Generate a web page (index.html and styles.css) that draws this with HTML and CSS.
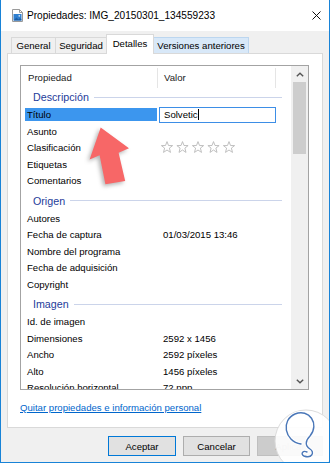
FILE: index.html
```html
<!DOCTYPE html>
<html>
<head>
  <title>Propiedades: IMG_20150301_134559233</title>
  <link rel="stylesheet" href="styles.css">
</head>
<body>

<div class="window">
  <div class="titlebar">
    <svg class="app-icon" width="11" height="13" viewBox="0 0 11 13">
      <path d="M0.5 0.5h7l3 3v9h-10z" fill="#fff" stroke="#9a9a9a"/>
      <path d="M7.5 0.5v3h3" fill="none" stroke="#9a9a9a"/>
      <rect x="1.5" y="5" width="8" height="6.5" fill="#2f7fd0"/>
      <path d="M1.5 11.5l3-3 2 2 1.5-1.5 1.5 1.5v1z" fill="#1d5ea6"/>
      <circle cx="7.3" cy="6.8" r="0.9" fill="#cfe4f8"/>
    </svg>
    <span class="title">Propiedades: IMG_20150301_134559233</span>
    <svg class="close" width="9" height="9" viewBox="0 0 9 9">
      <path d="M0.5 0.5L8.5 8.5M8.5 0.5L0.5 8.5" stroke="#111" stroke-width="1"/>
    </svg>
  </div>

  <div class="content">
    <div class="tabs">
      <div class="tab tab-general">General</div>
      <div class="tab tab-seguridad">Seguridad</div>
      <div class="tab tab-detalles active">Detalles</div>
      <div class="tab tab-versiones hover">Versiones anteriores</div>
    </div>

    <div class="panel">
      <div class="list">
        <div class="list-body">
          <div class="list-head">
            <div class="head-col1">Propiedad</div>
            <div class="head-col2">Valor</div>
          </div>

          <div class="group first"><span>Descripción</span><i class="rule"></i></div>
          <div class="row">
            <div class="cell1 selected">Título</div>
            <div class="cell2 edit-cell"><div class="edit">Solvetic<i class="caret"></i></div></div>
          </div>
          <div class="row"><div class="cell1">Asunto</div><div class="cell2"></div></div>
          <div class="row">
            <div class="cell1">Clasificación</div>
            <div class="cell2 stars-cell">
              <svg class="stars" width="76" height="13" viewBox="0 0 76 13">
                <defs>
                  <polygon id="star" points="6,0.6 7.5,4.5 11.6,4.6 8.4,7.1 9.5,11.4 6,9 2.5,11.4 3.6,7.1 0.4,4.6 4.5,4.5" fill="none" stroke="#b9b9b9" stroke-width="0.9" stroke-linejoin="round"/>
                </defs>
                <use href="#star" x="0"/>
                <use href="#star" x="15.5"/>
                <use href="#star" x="31"/>
                <use href="#star" x="46.5"/>
                <use href="#star" x="62"/>
              </svg>
            </div>
          </div>
          <div class="row"><div class="cell1">Etiquetas</div><div class="cell2"></div></div>
          <div class="row"><div class="cell1">Comentarios</div><div class="cell2"></div></div>

          <div class="group"><span>Origen</span><i class="rule"></i></div>
          <div class="row"><div class="cell1">Autores</div><div class="cell2"></div></div>
          <div class="row"><div class="cell1">Fecha de captura</div><div class="cell2">01/03/2015 13:46</div></div>
          <div class="row"><div class="cell1">Nombre del programa</div><div class="cell2"></div></div>
          <div class="row"><div class="cell1">Fecha de adquisición</div><div class="cell2"></div></div>
          <div class="row"><div class="cell1">Copyright</div><div class="cell2"></div></div>

          <div class="group"><span>Imagen</span><i class="rule"></i></div>
          <div class="row"><div class="cell1">Id. de imagen</div><div class="cell2"></div></div>
          <div class="row"><div class="cell1">Dimensiones</div><div class="cell2">2592 x 1456</div></div>
          <div class="row"><div class="cell1">Ancho</div><div class="cell2">2592 píxeles</div></div>
          <div class="row"><div class="cell1">Alto</div><div class="cell2">1456 píxeles</div></div>
          <div class="row"><div class="cell1">Resolución horizontal</div><div class="cell2">72 ppp</div></div>
        </div>

        <div class="scrollbar">
          <div class="sb-btn">
            <svg width="8" height="5" viewBox="0 0 8 5"><path d="M0.8 4.3L4 1.2L7.2 4.3" fill="none" stroke="#555" stroke-width="1.4"/></svg>
          </div>
          <div class="sb-thumb"></div>
          <div class="sb-track"></div>
          <div class="sb-btn">
            <svg width="8" height="5" viewBox="0 0 8 5"><path d="M0.8 0.7L4 3.8L7.2 0.7" fill="none" stroke="#555" stroke-width="1.4"/></svg>
          </div>
        </div>
      </div>

      <a class="remove-link" href="#">Quitar propiedades e información personal</a>
    </div>

    <div class="buttons">
      <button class="btn default">Aceptar</button>
      <button class="btn">Cancelar</button>
      <button class="btn disabled">Aplicar</button>
    </div>
  </div>

  <!-- annotation arrow drawn over the dialog -->
  <svg class="arrow" width="330" height="463" viewBox="0 0 330 463">
    <polygon points="100.7,127.5 129,148.3 118.6,152.8 125.2,181 105.4,184.2 99.6,155.2 89.6,159.4" fill="#f76767"/>
  </svg>

  <!-- watermark logo -->
  <svg class="logo" width="330" height="463" viewBox="0 0 330 463">
    <circle cx="306" cy="441" r="31" fill="rgba(255,255,255,0.9)" stroke="#dcdcdc" stroke-width="1"/>
    <path d="M301 444 C284 441 281 420 295 414 C309 408 320 424 310 436 C305 441 305 446 310 449 C315 452 312 459 304 456 C300 454 303 450 307 452" fill="none" stroke="#fff" stroke-width="3.2" stroke-linecap="round"/>
    <path d="M301 444 C284 441 281 420 295 414 C309 408 320 424 310 436 C305 441 305 446 310 449 C315 452 312 459 304 456 C300 454 303 450 307 452" fill="none" stroke="#4a77b8" stroke-width="1.4" stroke-linecap="round"/>
  </svg>
</div>

</body>
</html>
```

FILE: styles.css
```css
body {
  margin: 0;
  padding: 0;
  font-family: "Liberation Sans", Arial, sans-serif;
  font-size: 9.6px;
  color: #000;
}

.window {
  position: relative;
  width: 330px;
  height: 463px;
  box-sizing: border-box;
  border: 1px solid #1883d7;
  border-top: none;
  background: #f0f0f0;
  display: flex;
  flex-direction: column;
  overflow: hidden;
}

/* title bar */
.titlebar {
  height: 31px;
  flex: 0 0 31px;
  background: #fff;
  display: flex;
  align-items: center;
  padding: 0 8px 0 11px;
}
.app-icon {
  margin-right: 4px;
  margin-top: -1px;
}
.title {
  font-size: 10.1px;
  color: #000;
}
.close {
  margin-left: auto;
}

/* body of the dialog */
.content {
  flex: 1;
  padding: 3px 6px 0 6px;
  display: flex;
  flex-direction: column;
}

.tabs {
  height: 19px;
  display: flex;
  align-items: flex-start;
  padding-left: 4px;
}
.tab {
  box-sizing: border-box;
  height: 16px;
  margin-top: 3px;
  margin-left: -1px;
  border: 1px solid #d9d9d9;
  border-bottom: none;
  background: #f0f0f0;
  text-align: center;
  line-height: 15px;
}
.tab-general { width: 45px; margin-left: 0; }
.tab-seguridad { width: 52px; }
.tab-detalles { width: 48px; }
.tab-versiones { width: 96px; }
.tab.hover {
  background: #d8e8f8;
  border-color: #bcd6ef;
}
.tab.active {
  position: relative;
  z-index: 1;
  height: 20px;
  margin-top: 0;
  background: #fff;
  border-color: #d9d9d9;
  line-height: 18px;
}

.panel {
  box-sizing: border-box;
  height: 375px;
  flex: 0 0 375px;
  background: #fff;
  border: 1px solid #d9d9d9;
  padding: 11px 13px 0 12px;
}

/* property list */
.list {
  box-sizing: border-box;
  height: 325px;
  border: 1px solid #a3a3a3;
  display: flex;
}
.list-body {
  flex: 1;
  overflow: hidden;
}
.list-head {
  height: 22px;
  display: flex;
  color: #222;
}
.head-col1,
.head-col2 {
  box-sizing: border-box;
  border-right: 1px solid #e5e5e5;
  margin-top: 2px;
  height: 20px;
  line-height: 20px;
}
.head-col1 {
  width: 137px;
  padding-left: 7px;
}
.head-col2 {
  width: 118px;
  padding-left: 6px;
}

.group {
  height: 18.5px;
  display: flex;
  align-items: center;
  padding: 0 9px 0 12px;
  margin-top: 2.5px;
  color: #1e3c9a;
  font-size: 10.7px;
}
.group.first {
  margin-top: 0;
}
.group .rule {
  flex: 1;
  height: 1px;
  margin-left: 5px;
  background: #cbd4ea;
}

.row {
  height: 16.5px;
  display: flex;
  align-items: center;
}
.cell1 {
  box-sizing: border-box;
  width: 132px;
  margin-left: 4px;
  padding-left: 2px;
  height: 13px;
  line-height: 13px;
  white-space: nowrap;
}
.cell1.selected {
  background: #3c96ee;
}
.cell2 {
  padding-left: 6px;
  white-space: nowrap;
}
.edit-cell {
  padding-left: 2px;
}
.edit {
  box-sizing: border-box;
  width: 117px;
  height: 16px;
  border: 1px solid #3d8ee6;
  background: #fff;
  padding-left: 4px;
  line-height: 14px;
}
.caret {
  display: inline-block;
  width: 1px;
  height: 11px;
  background: #000;
  vertical-align: -2px;
}
.stars-cell {
  padding-left: 4px;
  height: 13px;
}
.stars {
  display: block;
}

/* scrollbar */
.scrollbar {
  width: 17px;
  flex: 0 0 17px;
  background: #f0f0f0;
  display: flex;
  flex-direction: column;
}
.sb-btn {
  height: 16px;
  display: flex;
  align-items: center;
  justify-content: center;
}
.sb-thumb {
  height: 72px;
  width: 13px;
  margin-left: 2px;
  background: #cdcdcd;
}
.sb-track {
  flex: 1;
}

.remove-link {
  display: block;
  margin-top: 11px;
  line-height: 13px;
  color: #0066cc;
  text-decoration: underline;
}

/* dialog buttons */
.buttons {
  margin-top: 8px;
  display: flex;
  justify-content: flex-end;
  gap: 7px;
}
.btn {
  box-sizing: border-box;
  width: 67px;
  height: 20px;
  border: 1px solid #adadad;
  background: #e1e1e1;
  font-family: "Liberation Sans", Arial, sans-serif;
  font-size: 9.6px;
  color: #000;
  padding: 0;
}
.btn.default {
  width: 68px;
  border-color: #0078d7;
}
.btn.disabled {
  width: 66px;
  background: #cccccc;
  border-color: #bfbfbf;
  color: #a0a0a0;
}

/* overlays */
.arrow {
  position: absolute;
  left: -1px;
  top: 0;
  pointer-events: none;
  filter: drop-shadow(-2px 2px 2px rgba(0, 0, 0, 0.3));
}
.logo {
  position: absolute;
  left: -1px;
  top: 0;
  pointer-events: none;
}
```
